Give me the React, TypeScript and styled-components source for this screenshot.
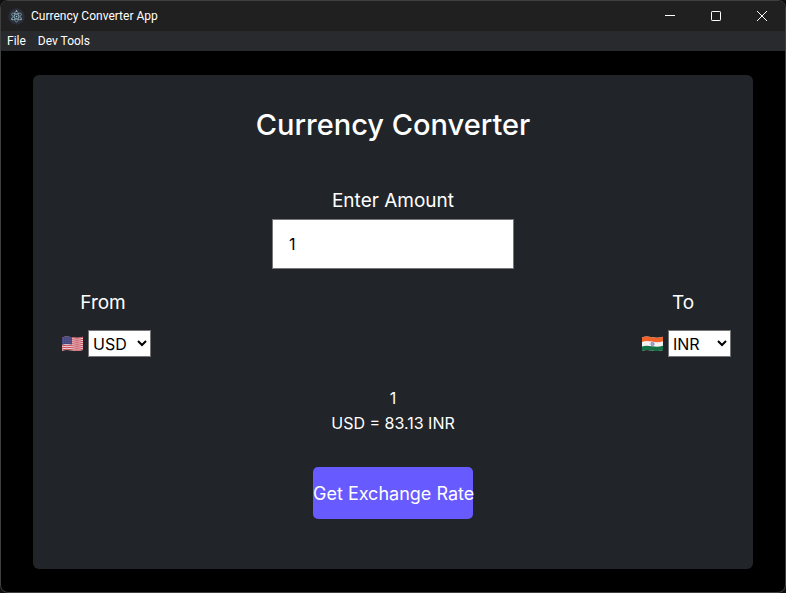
import React, { useState } from "react";
import styled, { createGlobalStyle } from "styled-components";

const GlobalStyle = createGlobalStyle`
  *, *::before, *::after { box-sizing: border-box; }
  body { margin: 0; background: #101010; }
  button, input, select { font-family: inherit; }
`;

const AppWindow = styled.div`
  display: flex;
  flex-direction: column;
  min-height: 100vh;
  overflow: hidden;
  border: 1px solid #3f3f3f;
  border-radius: 8px;
  background: #000;
  color: #fff;
  font-family: Inter, "Liberation Sans", sans-serif;
`;

const TitleBar = styled.header`
  display: flex;
  align-items: center;
  height: 30px;
  padding-left: 7px;
  background: #202020;
  font: 12px/16px Roboto, "Open Sans", sans-serif;
`;

const WindowTitle = styled.span`
  flex: 1;
  margin-left: 6px;
`;

const WindowButton = styled.button`
  display: grid;
  place-items: center;
  width: 46px;
  height: 30px;
  padding: 0;
  border: 0;
  background: transparent;
  color: #fff;
`;

const MenuBar = styled.nav`
  display: flex;
  gap: 12px;
  height: 20px;
  padding: 0 6px;
  background: #292a2d;
`;

const MenuItem = styled.button`
  padding: 0;
  border: 0;
  background: transparent;
  color: #fff;
  && { font: 12px/20px Roboto, "Open Sans", sans-serif; }
`;

const Page = styled.main`
  display: flex;
  flex: 1;
  padding: 24px 32px 23px;
`;

const Card = styled.form`
  display: flex;
  flex: 1;
  flex-direction: column;
  align-items: center;
  padding: 28px 22px 50px;
  border-radius: 6px;
  background: #212529;
`;

const Heading = styled.h1`
  margin: 0 0 40px;
  font-size: 29px;
  font-weight: 500;
  line-height: 44px;
`;

const Label = styled.label`
  font-size: 19px;
  line-height: 28px;
`;

const AmountInput = styled.input`
  width: 242px;
  height: 50px;
  margin: 4px 0 20px;
  padding: 0 16px;
  border: 1px solid #767676;
  background: #fff;
  color: #000;
  font-size: 16px;
`;

const CurrencyRow = styled.div`
  display: flex;
  justify-content: space-between;
  align-self: stretch;
  padding-left: 6px;
`;

const CurrencyField = styled.div`
  display: flex;
  flex-direction: column;
  align-items: center;
  gap: 13px;

  ${Label} { padding-right: 6px; }
`;

const CurrencyPicker = styled.div`
  display: flex;
  align-items: center;
  gap: 4px;
`;

const Flag = styled.svg`
  width: 23px;
  height: 16px;
`;

const CurrencySelect = styled.select`
  width: 63px;
  height: 27px;
  padding: 0;
  border: 1px solid #767676;
  border-radius: 0;
  background: #fff;
  color: #000;
  font-size: 16px;
`;

const Result = styled.output`
  margin: 29px 0 31px;
  font-size: 16px;
  line-height: 25px;
  text-align: center;
`;

const Amount = styled.div``;

const SubmitButton = styled.button`
  width: 160px;
  height: 52px;
  padding: 0;
  border: 0;
  border-radius: 5px;
  background: #675afe;
  color: #fff;
  font-size: 18px;
  white-space: nowrap;
`;

function AppLogo() {
  return (
    <svg width="17" height="17" viewBox="0 0 17 17" aria-hidden="true">
      <circle cx="8.5" cy="8.5" r="8.2" fill="#2b2e3a" />
      <g fill="none" stroke="#8fb3bd" strokeWidth=".7">
        <ellipse cx="8.5" cy="8.5" rx="5.5" ry="2.1" transform="rotate(30 8.5 8.5)" />
        <ellipse cx="8.5" cy="8.5" rx="5.5" ry="2.1" transform="rotate(90 8.5 8.5)" />
        <ellipse cx="8.5" cy="8.5" rx="5.5" ry="2.1" transform="rotate(150 8.5 8.5)" />
      </g>
      <g fill="#a7ccd5">
        <circle cx="8.5" cy="8.5" r=".8" />
        <circle cx="4" cy="11.2" r=".7" />
        <circle cx="13" cy="11.2" r=".7" />
        <circle cx="8.5" cy="3" r=".7" />
      </g>
    </svg>
  );
}

const wave = "M1 1.500C4 0 7 .5 11 1.200S18 2 22 .7V14C18 15.500 15 15.300 11 14.500S4 13.500 1 15Z";

function UsFlag() {
  return (
    <Flag viewBox="0 0 23 16" role="img" aria-label="United States">
      <path d={wave} fill="#ecdfe2" />
      <g fill="none" stroke="#c9434f" strokeWidth="1.1">
        {[0, 2, 4, 6, 8, 10, 12].map((y) => (
          <path key={y} d={`M1 ${y + 2}C4 ${y + 0.8} 7 ${y + 1} 11 ${y + 1.7}S18 ${y + 2.5} 22 ${y + 1.2}`} />
        ))}
      </g>
      <path d="M1 1.500C4 0 7 .5 11 1.200V8.500C7 7.800 4 7.500 1 8.800Z" fill="#46467f" />
      <g fill="none" stroke="#8e8eb8" strokeWidth=".6" strokeDasharray=".7 1.2">
        <path d="M2 2.800C5 1.700 8 2 10.500 2.600" />
        <path d="M2 4.800C5 3.700 8 4 10.500 4.600" />
        <path d="M2 6.800C5 5.700 8 6 10.500 6.600" />
      </g>
    </Flag>
  );
}

function IndiaFlag() {
  return (
    <Flag viewBox="0 0 23 16" role="img" aria-label="India">
      <path d={wave} fill="#f3f1f0" />
      <path d="M1 1.500C4 0 7 .5 11 1.200S18 2 22 .7V5.300C18 6.500 15 6.300 11 5.600S4 4.800 1 6Z" fill="#f0642c" />
      <path d="M1 10.500C4 9.300 7 9.500 11 10.200S18 11 22 9.700V14C18 15.500 15 15.300 11 14.500S4 13.500 1 15Z" fill="#147044" />
      <circle cx="11.500" cy="8" r="1.7" fill="#a9a8d8" stroke="#6868ad" strokeWidth=".6" />
    </Flag>
  );
}

export default function App() {
  const [amount, setAmount] = useState("1");
  const [from, setFrom] = useState("USD");
  const [to, setTo] = useState("INR");

  return (
    <>
      <GlobalStyle />
      <AppWindow>
        <TitleBar>
          <AppLogo />
          <WindowTitle>Currency Converter App</WindowTitle>
          <WindowButton aria-label="Minimize">
            <svg width="10" height="10"><path d="M0 4.500H10" stroke="currentColor" /></svg>
          </WindowButton>
          <WindowButton aria-label="Maximize">
            <svg width="10" height="10"><rect x=".5" y=".5" width="9" height="9" rx=".7" fill="none" stroke="currentColor" /></svg>
          </WindowButton>
          <WindowButton aria-label="Close">
            <svg width="10" height="10"><path d="M0 0L10 10M10 0L0 10" stroke="currentColor" /></svg>
          </WindowButton>
        </TitleBar>
        <MenuBar aria-label="Application menu">
          <MenuItem>File</MenuItem>
          <MenuItem>Dev Tools</MenuItem>
        </MenuBar>
        <Page>
          <Card onSubmit={(event) => event.preventDefault()}>
            <Heading>Currency Converter</Heading>
            <Label htmlFor="amount">Enter Amount</Label>
            <AmountInput id="amount" inputMode="decimal" value={amount} onChange={(event) => setAmount(event.target.value)} />
            <CurrencyRow>
              <CurrencyField>
                <Label htmlFor="from">From</Label>
                <CurrencyPicker>
                  <UsFlag />
                  <CurrencySelect id="from" value={from} onChange={(event) => setFrom(event.target.value)}>
                    <option>USD</option>
                    <option>INR</option>
                  </CurrencySelect>
                </CurrencyPicker>
              </CurrencyField>
              <CurrencyField>
                <Label htmlFor="to">To</Label>
                <CurrencyPicker>
                  <IndiaFlag />
                  <CurrencySelect id="to" value={to} onChange={(event) => setTo(event.target.value)}>
                    <option>INR</option>
                    <option>USD</option>
                  </CurrencySelect>
                </CurrencyPicker>
              </CurrencyField>
            </CurrencyRow>
            <Result htmlFor="amount from to">
              <Amount>1</Amount>
              USD = 83.13 INR
            </Result>
            <SubmitButton type="submit">Get Exchange Rate</SubmitButton>
          </Card>
        </Page>
      </AppWindow>
    </>
  );
}
